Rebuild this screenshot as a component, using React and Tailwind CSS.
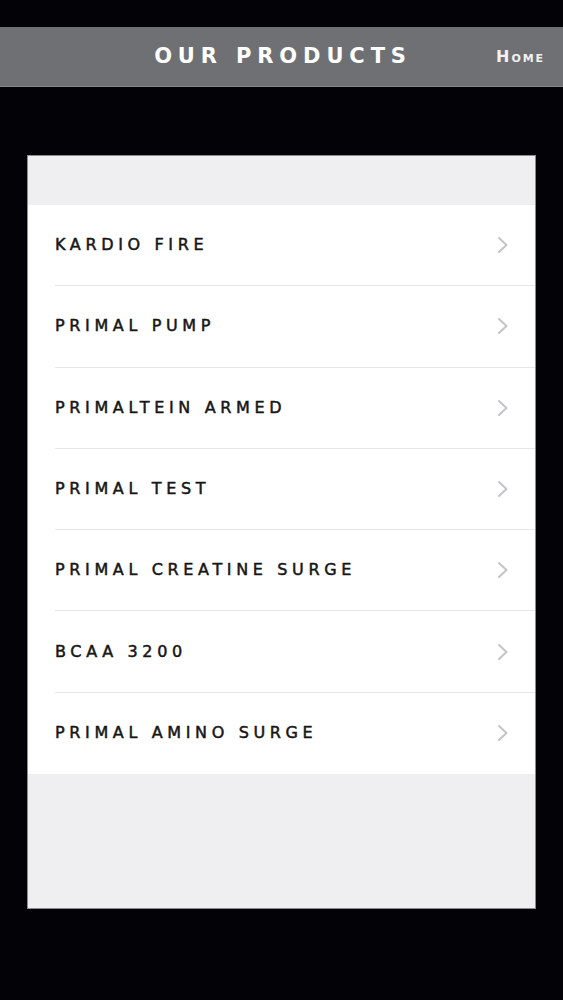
import React from 'react';

const products = [
  'Kardio Fire',
  'Primal Pump',
  'Primaltein Armed',
  'Primal Test',
  'Primal Creatine Surge',
  'BCAA 3200',
  'Primal Amino Surge',
];

function Chevron() {
  return (
    <svg width="12" height="18" viewBox="0 0 12 18" fill="none" className="shrink-0">
      <path d="M2 2l7.5 7L2 16" stroke="#c4c4c8" strokeWidth="2" strokeLinecap="round" strokeLinejoin="round" />
    </svg>
  );
}

export default function App() {
  return (
    <div className="bg-[#030206] min-h-screen h-[1000px] flex flex-col pt-[27px] font-['DejaVu_Sans',sans-serif]">
      <header className="h-[60px] bg-[#6e7074] border-b border-[#85878b] relative flex items-center justify-center">
        <h1 className="text-white font-bold text-[21px] tracking-[0.28em] uppercase pl-[3px]">Our Products</h1>
        <span className="absolute right-[18px] top-[18px] text-[#f2f2f2] text-[16px] font-bold tracking-[0.12em] [font-variant:small-caps]">
          Home
        </span>
      </header>

      <main className="px-[27px] pt-[68px]">
        <div className="w-[509px] h-[754px] bg-[#efeef0] border border-[#8c8c90] flex flex-col">
          <div className="h-[49px]" />
          <ul className="bg-white">
            {products.map((p, i) => (
              <li key={p} className="pl-[27px]">
                <div
                  className={`h-[81.3px] flex items-center justify-between pr-[26px] ${
                    i < products.length - 1 ? 'border-b border-[#e6e6e8]' : ''
                  }`}
                >
                  <span className="text-[#161616] text-[16px] tracking-[0.29em] uppercase [-webkit-text-stroke:0.5px_#161616]">{p}</span>
                  <Chevron />
                </div>
              </li>
            ))}
          </ul>
        </div>
      </main>
    </div>
  );
}
